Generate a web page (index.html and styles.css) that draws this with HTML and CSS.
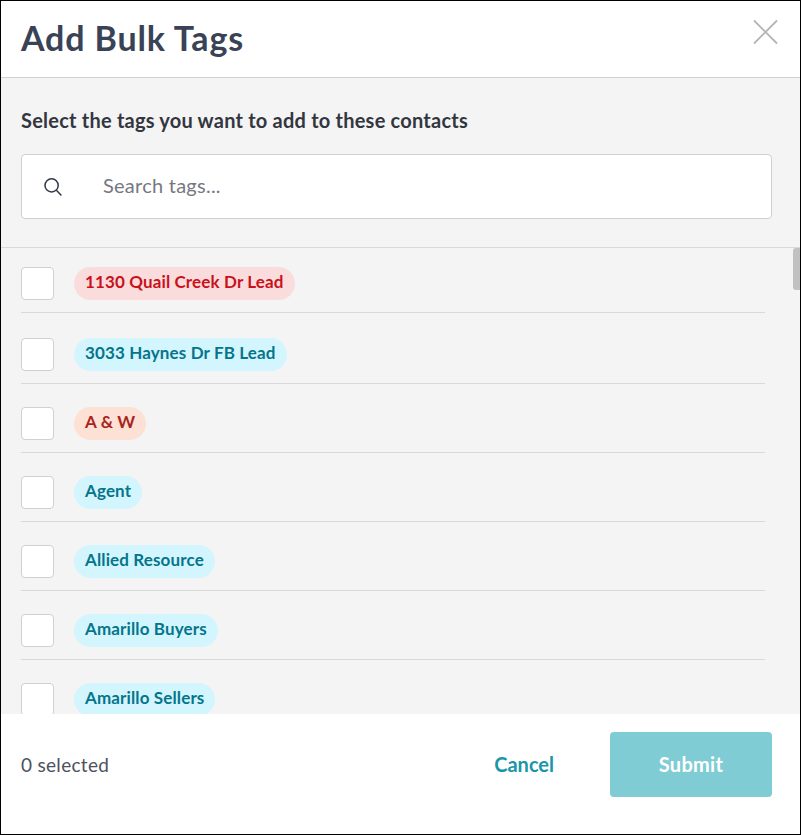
FILE: index.html
```html
<!DOCTYPE html>
<html lang="en">
<head>
    <meta charset="UTF-8">
    <meta name="viewport" content="width=device-width, initial-scale=1.0">
    <title>Add Bulk Tags</title>
    <link rel="stylesheet" href="styles.css">
</head>
<body>
    <div class="modal">
        <div class="modal-header">
            <h1>Add Bulk Tags</h1>
            <svg class="close-icon" width="26" height="26" viewBox="0 0 26 26">
                <path d="M2 1.5 L25 24.5 M25 1.5 L2 24.5" stroke="#b5b5b5" stroke-width="1.8" fill="none"/>
            </svg>
        </div>

        <div class="modal-intro">
            <p class="intro-label">Select the tags you want to add to these contacts</p>
            <div class="search-box">
                <svg class="search-icon" width="20" height="20" viewBox="0 0 20 20">
                    <circle cx="8.6" cy="8.4" r="6.6" stroke="#33384a" stroke-width="1.5" fill="none"/>
                    <path d="M13.4 13.2 L18.4 18.4" stroke="#33384a" stroke-width="1.5" fill="none"/>
                </svg>
                <span class="search-placeholder">Search tags...</span>
            </div>
        </div>

        <div class="tag-list">
            <div class="tag-row"><span class="check"></span><span class="tag tag-red">1130 Quail Creek Dr Lead</span></div>
            <div class="tag-row"><span class="check"></span><span class="tag tag-blue">3033 Haynes Dr FB Lead</span></div>
            <div class="tag-row"><span class="check"></span><span class="tag tag-orange">A &amp; W</span></div>
            <div class="tag-row"><span class="check"></span><span class="tag tag-blue">Agent</span></div>
            <div class="tag-row"><span class="check"></span><span class="tag tag-blue">Allied Resource</span></div>
            <div class="tag-row"><span class="check"></span><span class="tag tag-blue">Amarillo Buyers</span></div>
            <div class="tag-row"><span class="check"></span><span class="tag tag-blue">Amarillo Sellers</span></div>
            <div class="scroll-thumb"></div>
        </div>

        <div class="modal-footer">
            <span class="selected-count">0 selected</span>
            <span class="cancel-link">Cancel</span>
            <span class="submit-btn">Submit</span>
        </div>
    </div>
</body>
</html>
```

FILE: styles.css
```css
* {
    box-sizing: border-box;
}
body {
    margin: 0;
    font-family: Lato, "Open Sans", sans-serif;
    color: #33384a;
}
.modal {
    height: 835px;
    border: 1px solid #000;
    display: flex;
    flex-direction: column;
    background: #f4f4f4;
}
.modal-header {
    height: 77px;
    flex: none;
    background: #fff;
    border-bottom: 1px solid #d2d2d2;
    padding: 0 22px 0 20px;
    display: flex;
    justify-content: space-between;
    align-items: flex-start;
}
.modal-header h1 {
    margin: 15px 0 0;
    font-size: 34px;
    line-height: 44px;
    font-weight: 700;
    letter-spacing: 0.85px;
    color: #3a4256;
}
.close-icon {
    margin-top: 18px;
}
.modal-intro {
    flex: none;
    height: 170px;
    padding: 30px 28px 0 20px;
    border-bottom: 1px solid #d9d9d9;
}
.intro-label {
    margin: 0;
    font-size: 20px;
    line-height: 24px;
    font-weight: 700;
    letter-spacing: 0.22px;
    color: #33363f;
}
.search-box {
    margin-top: 22px;
    height: 65px;
    background: #fff;
    border: 1px solid #cfcfcf;
    border-radius: 4px;
    display: flex;
    align-items: center;
    padding-left: 21px;
}
.search-icon {
    flex: none;
}
.search-placeholder {
    margin-left: 40px;
    margin-bottom: 4px;
    font-size: 20px;
    letter-spacing: 0.25px;
    color: #77777f;
}
.tag-list {
    flex: 1;
    min-height: 0;
    overflow: hidden;
    position: relative;
    padding: 0 35px 0 20px;
}
.scroll-thumb {
    position: absolute;
    top: 0;
    right: 0;
    width: 7px;
    height: 42px;
    background: #c1c1c1;
    border-radius: 3px 0 0 3px;
}
.tag-row {
    display: flex;
    align-items: center;
    padding: 23px 0 12px;
    border-bottom: 1px solid #d9d9d9;
}
.tag-row:first-child {
    padding-top: 19px;
}
.tag-row:nth-child(2) {
    padding-top: 25px;
}
.check {
    flex: none;
    width: 33px;
    height: 33px;
    background: #fff;
    border: 1px solid #cdd0d4;
    border-radius: 4px;
    margin-right: 20px;
}
.tag {
    height: 33px;
    line-height: 30px;
    padding: 0 11px;
    border-radius: 17px;
    font-size: 17px;
    font-weight: 700;
    letter-spacing: 0.13px;
}
.tag-red {
    background: #fadcdd;
    color: #c9101b;
}
.tag-blue {
    background: #d3f5fe;
    color: #05758c;
}
.tag-orange {
    background: #fde1d4;
    color: #a8251c;
}
.modal-footer {
    flex: none;
    height: 120px;
    background: #fff;
    display: flex;
    align-items: flex-start;
    padding: 18px 28px 0 20px;
}
.selected-count {
    margin-top: 20px;
    font-size: 19px;
    line-height: 26px;
    letter-spacing: 0.3px;
    color: #4e515c;
    margin-right: auto;
}
.cancel-link {
    margin-top: 19px;
    font-size: 20px;
    line-height: 26px;
    font-weight: 700;
    color: #1996a8;
    margin-right: 56px;
}
.submit-btn {
    width: 162px;
    height: 65px;
    padding-bottom: 2px;
    background: #7fccd4;
    border-radius: 4px;
    color: #fff;
    font-size: 20px;
    font-weight: 700;
    letter-spacing: 0.3px;
    display: flex;
    align-items: center;
    justify-content: center;
}
```
